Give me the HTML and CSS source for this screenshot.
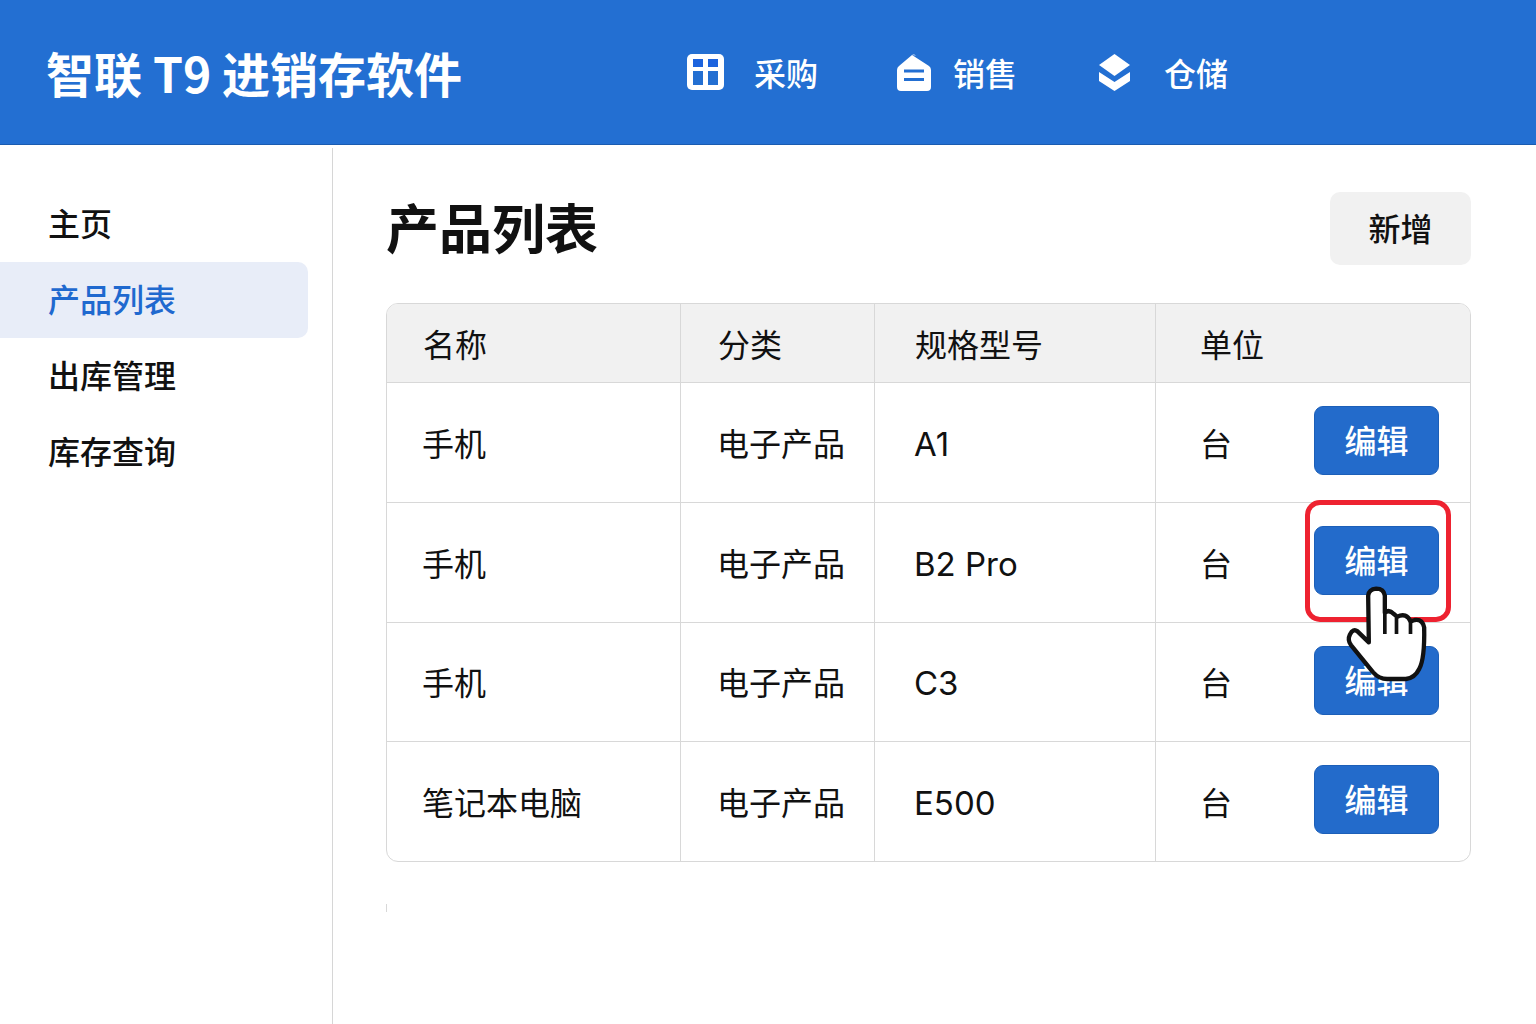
FILE: index.html
```html
<!DOCTYPE html>
<html lang="zh-CN">
<head>
    <meta charset="UTF-8">
    <title>智联 T9 进销存软件</title>
    <link rel="stylesheet" href="styles.css">
</head>
<body>

<header class="topbar">
    <div class="brand">智联 T9 进销存软件</div>
    <nav class="topnav">
        <a href="#" class="topnav-item item-purchase">
            <svg class="icon-grid" viewBox="0 0 37 36">
                <rect width="37" height="36" rx="5" fill="#fff"/>
                <rect x="6" y="5" width="10" height="8" fill="#1c63de"/>
                <rect x="21" y="5" width="10" height="8" fill="#1c63de"/>
                <rect x="6" y="17" width="10" height="14" fill="#236fd2"/>
                <rect x="21" y="17" width="10" height="14" fill="#236fd2"/>
            </svg>
            <span>采购</span>
        </a>
        <a href="#" class="topnav-item item-sales">
            <svg class="icon-store" viewBox="0 0 34 37">
                <path d="M15 1 L32 12 Q34 13.500 34 16 V33 Q34 37 30 37 H4 Q0 37 0 33 V16 Q0 13.500 2 12 L15 1 Q17 0 19 1.500 Z" fill="#fff"/>
                <rect x="7" y="15.500" width="20" height="3" fill="#236fd2"/>
                <rect x="7" y="24" width="20" height="3" fill="#236fd2"/>
            </svg>
            <span>销售</span>
        </a>
        <a href="#" class="topnav-item item-stock">
            <svg class="icon-layers" viewBox="0 0 31 37">
                <path d="M15.500 0 L31 11 L15.500 22 L0 11 Z" fill="#fff"/>
                <path d="M0 18 L15.500 28 L31 18 V27 L15.500 37 L0 27 Z" fill="#fff"/>
            </svg>
            <span>仓储</span>
        </a>
    </nav>
</header>

<div class="layout">
    <aside class="sidebar">
        <a href="#" class="side-link">主页</a>
        <a href="#" class="side-link active">产品列表</a>
        <a href="#" class="side-link">出库管理</a>
        <a href="#" class="side-link">库存查询</a>
    </aside>

    <main class="content">
        <div class="page-head">
            <h1>产品列表</h1>
            <button class="add-btn">新增</button>
        </div>

        <table class="product-table">
            <thead>
                <tr>
                    <th class="col-name">名称</th>
                    <th class="col-type">分类</th>
                    <th class="col-model">规格型号</th>
                    <th>单位</th>
                </tr>
            </thead>
            <tbody>
                <tr>
                    <td>手机</td>
                    <td>电子产品</td>
                    <td class="model">A1</td>
                    <td>
                        <div class="unit-cell">
                            <span>台</span>
                            <button class="edit-btn">编辑</button>
                        </div>
                    </td>
                </tr>
                <tr>
                    <td>手机</td>
                    <td>电子产品</td>
                    <td class="model">B2 Pro</td>
                    <td>
                        <div class="unit-cell">
                            <span>台</span>
                            <div class="edit-wrap">
                                <button class="edit-btn">编辑</button>
                                <div class="highlight-ring"></div>
                                <svg class="hand" viewBox="160 280 260 300">
                                    <path d="M235 315 L237 455 L203 422 Q190 412 180 432 Q172 448 184 464 L250 545 Q268 565 292 565 L348 565 Q375 562 388 535 Q405 505 403 410 Q398 385 375 388 L362 392 Q350 365 322 378 L312 370 Q298 355 285 366 L285 315 Q282 294 259 294 Q237 296 235 315 Z" fill="#fff" stroke="#111" stroke-width="13" stroke-linejoin="round"/>
                                    <path d="M285 366 V430 M320 380 V430 M362 392 V430" fill="none" stroke="#111" stroke-width="11"/>
                                </svg>
                            </div>
                        </div>
                    </td>
                </tr>
                <tr>
                    <td>手机</td>
                    <td>电子产品</td>
                    <td class="model">C3</td>
                    <td>
                        <div class="unit-cell">
                            <span>台</span>
                            <button class="edit-btn">编辑</button>
                        </div>
                    </td>
                </tr>
                <tr>
                    <td>笔记本电脑</td>
                    <td>电子产品</td>
                    <td class="model">E500</td>
                    <td>
                        <div class="unit-cell">
                            <span>台</span>
                            <button class="edit-btn">编辑</button>
                        </div>
                    </td>
                </tr>
            </tbody>
        </table>
        <div class="stray-tick"></div>
    </main>
</div>

</body>
</html>
```

FILE: styles.css
```css
* {
    margin: 0;
    padding: 0;
    box-sizing: border-box;
    font-family: Inter, "Noto Sans CJK SC", sans-serif;
}

body {
    background: #fff;
    color: #111;
    height: 1024px;
    overflow: hidden;
}

a {
    text-decoration: none;
}

.topbar {
    display: flex;
    align-items: center;
    height: 145px;
    padding-left: 46px;
    background-color: #236fd2;
    border-bottom: 1px solid #1a5bb0;
    color: #fff;
}

.brand {
    width: 641px;
    font-family: "Noto Sans CJK SC", sans-serif;
    font-size: 48px;
    font-weight: 700;
    white-space: nowrap;
}

.topnav {
    display: flex;
    align-items: center;
    gap: 79px;
}

.topnav-item {
    display: flex;
    align-items: center;
    color: #fff;
    font-size: 32px;
    font-weight: 500;
}

.item-stock {
    margin-left: 3px;
}

.icon-grid {
    width: 37px;
    height: 36px;
    margin-right: 30px;
}

.icon-store {
    width: 34px;
    height: 37px;
    margin-right: 22px;
}

.icon-layers {
    width: 31px;
    height: 37px;
    margin-right: 34px;
}

.layout {
    display: flex;
    height: 879px;
}

.sidebar {
    width: 333px;
    margin-top: 3px;
    padding: 38px 24px 0 0;
    border-right: 1px solid #d6d6d6;
}

.side-link {
    display: block;
    height: 76px;
    padding-left: 48px;
    line-height: 78px;
    font-size: 32px;
    font-weight: 500;
    color: #111;
}

.side-link.active {
    background-color: #e8edf8;
    border-radius: 0 10px 10px 0;
    color: #1f69cf;
}

.content {
    flex: 1;
    padding: 47px 65px 0 53px;
}

.page-head {
    display: flex;
    justify-content: space-between;
    align-items: center;
    margin-bottom: 38px;
}

.page-head h1 {
    margin-top: 4px;
    font-size: 53px;
    font-weight: 700;
    line-height: 1;
}

.add-btn {
    width: 141px;
    height: 73px;
    padding-bottom: 3px;
    border: none;
    border-radius: 10px;
    background: #f1f1f1;
    color: #111;
    font-size: 32px;
    font-weight: 500;
}

.product-table {
    width: 100%;
    table-layout: fixed;
    border-collapse: separate;
    border-spacing: 0;
    border: 1px solid #d8d8d8;
    border-radius: 12px;
}

.product-table th,
.product-table td {
    font-size: 32px;
    text-align: left;
    border-left: 1px solid #d8d8d8;
}

.product-table th:first-child,
.product-table td:first-child {
    border-left: none;
}

.product-table th {
    height: 79px;
    background: #f1f1f1;
    font-weight: 400;
    border-bottom: 1px solid #d8d8d8;
}

.product-table th:first-child {
    border-top-left-radius: 11px;
}

.product-table th:last-child {
    border-top-right-radius: 11px;
}

.product-table td {
    height: 120px;
    padding-bottom: 2px;
    font-weight: 400;
    border-top: 1px solid #d8d8d8;
}

.product-table tbody tr:nth-child(odd) td {
    height: 119px;
}

.product-table td.model {
    padding-top: 2px;
    padding-bottom: 0;
    font-size: 33px;
}

.product-table tbody tr:first-child td {
    border-top: none;
}

.col-name {
    width: 293px;
}

.col-type {
    width: 194px;
}

.col-model {
    width: 281px;
}

.product-table th:nth-child(1) {
    padding-left: 36px;
}

.product-table td:nth-child(1) {
    padding-left: 35px;
}

.product-table th:nth-child(2) {
    padding-left: 37px;
}

.product-table td:nth-child(2) {
    padding-left: 36px;
}

.product-table th:nth-child(3) {
    padding-left: 40px;
}

.product-table td:nth-child(3) {
    padding-left: 39px;
}

.product-table th:nth-child(4),
.product-table td:nth-child(4) {
    padding-left: 44px;
}

.unit-cell {
    display: flex;
    justify-content: space-between;
    align-items: center;
    padding-right: 31px;
}

.edit-wrap {
    position: relative;
    margin-top: -2px;
}

.unit-cell > .edit-btn {
    margin-top: -2px;
}

.edit-btn {
    display: block;
    width: 125px;
    height: 69px;
    padding-bottom: 3px;
    border: 1px solid #1c5fb8;
    border-radius: 9px;
    background: #236bcb;
    color: #fff;
    font-size: 32px;
    font-weight: 500;
}

.highlight-ring {
    position: absolute;
    left: -9px;
    right: -12px;
    top: -26px;
    bottom: -27px;
    border: 5px solid #ee2230;
    border-radius: 15px;
}

.hand {
    position: absolute;
    left: 29px;
    top: 58px;
    width: 87px;
    height: 100px;
}

.stray-tick {
    width: 1px;
    height: 8px;
    margin-top: 42px;
    background: #d8d8d8;
}
```
